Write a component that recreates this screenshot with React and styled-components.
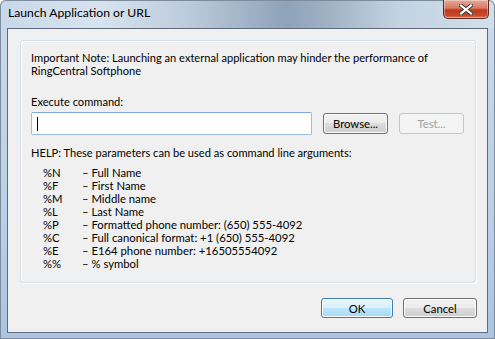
import React from "react";
import styled, { createGlobalStyle } from "styled-components";

const Global = createGlobalStyle`
  html, body { margin: 0; padding: 0; background: #ffffff; }
  body { font-family: Lato, "Open Sans", sans-serif; }
`;

const Window = styled.div`
  width: 495px;
  height: 339px;
  box-sizing: border-box;
  display: flex;
  flex-direction: column;
  padding: 0 7px 6px 7px;
  border-radius: 6px 6px 0 0;
  background: linear-gradient(90deg, #c9d8e8 0%, #d7e3ef 20%, #bccbdb 38%, #8ea2b8 58%, #9fb1c4 66%, #c3d2e1 80%, #d2dfeb 100%);
  box-shadow: inset 0 0 0 1px #7d8b9c;
  position: relative;
  overflow: hidden;
`;

const SideGlass = styled.div`
  position: absolute;
  left: 0;
  right: 0;
  top: 28px;
  bottom: 0;
  background: linear-gradient(180deg, #c7d9ec 0%, #b9d0e8 60%, #a9c5e3 100%);
  z-index: 0;
  box-shadow: inset 1px 0 0 #7d8b9c, inset -1px 0 0 #7d8b9c, inset 0 -1px 0 #7d8b9c;
`;

const TitleBar = styled.div`
  height: 28px;
  display: flex;
  align-items: flex-start;
  justify-content: space-between;
  position: relative;
  z-index: 1;
`;

const Title = styled.div`
  font-size: 12.2px;
  color: #000;
  padding-top: 5px;
  padding-left: 1px;
`;

const CloseButton = styled.div`
  width: 46px;
  height: 19px;
  margin-right: -1px;
  box-sizing: border-box;
  border: 1px solid #5a2a22;
  border-top: none;
  border-radius: 0 0 5px 5px;
  background: linear-gradient(180deg, #e7a898 0%, #d77a62 45%, #c1391c 55%, #c7472a 85%, #d87b5f 100%);
  box-shadow: inset 0 0 0 1px rgba(255,255,255,0.35);
  display: flex;
  align-items: center;
  justify-content: center;
`;

const Client = styled.div`
  flex: 1;
  position: relative;
  z-index: 1;
  background: #f0f0f0;
  border: 1px solid #5d6b7c;
  display: flex;
  flex-direction: column;
  padding: 11px 10px 0 12px;
`;

const GroupBox = styled.div`
  height: 243px;
  box-sizing: border-box;
  border: 1px solid #d5dfe5;
  border-radius: 3px;
  box-shadow: inset 1px 1px 0 #ffffff, 1px 1px 0 #ffffff;
  padding: 10px 10px 0 10px;
  margin-right: 1px;
  display: flex;
  flex-direction: column;
  font-size: 11.1px;
  color: #000;
`;

const Text = styled.div`
  line-height: 13px;
  margin-top: ${(p) => p.$mt || 0}px;
`;

const InputRow = styled.div`
  display: flex;
  align-items: center;
  margin-top: 4px;
`;

const TextInput = styled.div`
  width: 281px;
  height: 23px;
  box-sizing: border-box;
  border: 1px solid #9cbfe3;
  border-top-color: #7fa8d6;
  border-radius: 2px;
  background: #fff;
  display: flex;
  align-items: center;
  padding-left: 5px;
`;

const Caret = styled.div`
  width: 1px;
  height: 14px;
  background: #000;
`;

const Button = styled.div`
  width: ${(p) => p.$w}px;
  height: ${(p) => p.$h}px;
  box-sizing: border-box;
  border-radius: 3px;
  border: 1px solid ${(p) => (p.$disabled ? "#c5c5c5" : p.$default ? "#3c7fb1" : "#707070")};
  background: ${(p) =>
    p.$disabled
      ? "#f4f4f4"
      : p.$default
      ? "linear-gradient(180deg, #eaf6fd 0%, #d9f0fc 50%, #bee6fd 50%, #a7d9f5 100%)"
      : "linear-gradient(180deg, #f2f2f2 0%, #ebebeb 50%, #dddddd 50%, #cfcfcf 100%)"};
  box-shadow: inset 0 0 0 1px ${(p) => (p.$disabled ? "#f4f4f4" : "#fcfcfc")};
  color: ${(p) => (p.$disabled ? "#a0a0a0" : "#000")};
  font-size: 11.3px;
  display: flex;
  align-items: center;
  justify-content: center;
  margin-left: ${(p) => p.$ml || 0}px;
`;

const ParamList = styled.div`
  display: grid;
  grid-template-columns: 39px auto;
  grid-auto-rows: 13px;
  line-height: 13px;
  margin-top: 7px;
  padding-left: 12px;
  font-size: 11.3px;
`;

const Footer = styled.div`
  display: flex;
  justify-content: flex-end;
  margin-top: 15px;
  gap: 10px;
`;

const params = [
  ["%N", "– Full Name"],
  ["%F", "– First Name"],
  ["%M", "– Middle name"],
  ["%L", "– Last Name"],
  ["%P", "– Formatted phone number: (650) 555-4092"],
  ["%C", "– Full canonical format: +1 (650) 555-4092"],
  ["%E", "– E164 phone number: +16505554092"],
  ["%%", "– % symbol"],
];

export default function App() {
  return (
    <>
      <Global />
      <Window>
        <SideGlass />
        <TitleBar>
          <Title>Launch Application or URL</Title>
          <CloseButton>
            <svg width="14" height="11" viewBox="0 0 14 11">
              <path d="M2 1.5 L12 9.5 M12 1.5 L2 9.5" stroke="#3a3a3a" strokeWidth="4" strokeLinecap="square" />
              <path d="M2 1.5 L12 9.5 M12 1.5 L2 9.5" stroke="#ffffff" strokeWidth="2.2" strokeLinecap="square" />
            </svg>
          </CloseButton>
        </TitleBar>
        <Client>
          <GroupBox>
            <Text>
              Important Note: Launching an external application may hinder the performance of
              <br />
              RingCentral Softphone
            </Text>
            <Text $mt={18}>Execute command:</Text>
            <InputRow>
              <TextInput>
                <Caret />
              </TextInput>
              <Button $w={65} $h={21} $ml={11}>Browse...</Button>
              <Button $w={65} $h={21} $ml={11} $disabled>Test...</Button>
            </InputRow>
            <Text $mt={11}>HELP: These parameters can be used as command line arguments:</Text>
            <ParamList>
              {params.map(([k, v]) => (
                <React.Fragment key={k}>
                  <span>{k}</span>
                  <span>{v}</span>
                </React.Fragment>
              ))}
            </ParamList>
          </GroupBox>
          <Footer>
            <Button $w={72} $h={20} $default>OK</Button>
            <Button $w={74} $h={20}>Cancel</Button>
          </Footer>
        </Client>
      </Window>
    </>
  );
}
